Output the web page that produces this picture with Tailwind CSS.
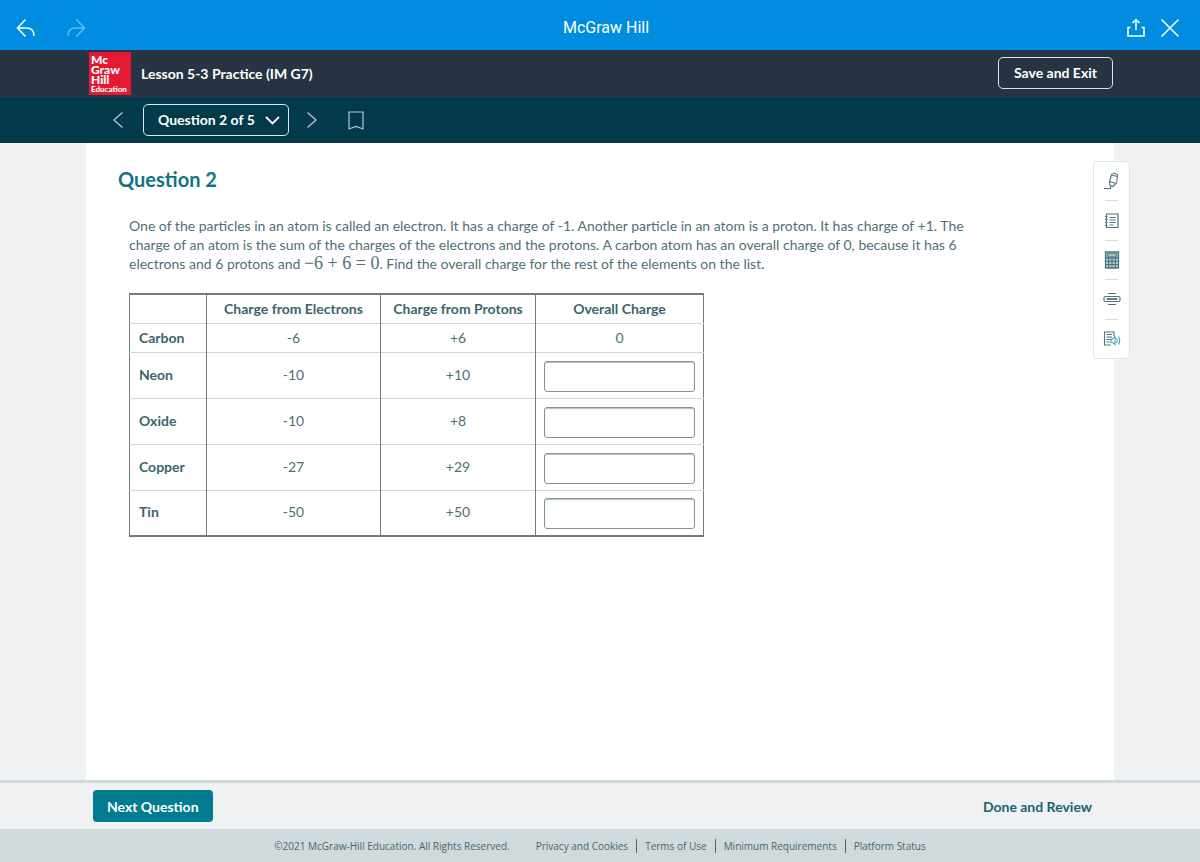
<!DOCTYPE html>
<html lang="en">
<head>
  <meta charset="UTF-8">
  <meta name="viewport" content="width=device-width, initial-scale=1.0">
  <title>Lesson 5-3 Practice (IM G7) - McGraw Hill</title>
  <script src="https://cdn.jsdelivr.net/npm/@tailwindcss/browser@4"></script>
</head>
<body class="min-h-screen flex flex-col bg-[#eff1f2] font-['Lato',sans-serif] text-[14px] text-[#4f7078]">

<!-- App bar -->
<div class="bg-[#008ce0] text-white h-[50px] pl-4 pr-5 pt-[6px] flex justify-between items-center">
  <div class="flex items-center gap-[30px]">
    <button aria-label="Back">
      <svg class="w-5 h-5" viewBox="0 0 20 20" fill="none" stroke="currentColor" stroke-width="1.5"><path d="M9.5 1.5L1.5 10l8 8.5M1.5 10h9c5 0 7.500 3 7.500 8"/></svg>
    </button>
    <button class="text-[#58c0f3]" aria-label="Forward">
      <svg class="w-5 h-5" viewBox="0 0 20 20" fill="none" stroke="currentColor" stroke-width="1.5"><path d="M10.500 1.500l8 8.500-8 8.500M18.500 10h-9C4.500 10 2 13 2 18"/></svg>
    </button>
  </div>
  <div class="text-[16px] font-['Roboto',sans-serif]">McGraw Hill</div>
  <div class="flex items-center gap-[14px]">
    <button aria-label="Share">
      <svg class="w-5 h-5" viewBox="0 0 20 20" fill="none" stroke="currentColor" stroke-width="1.5"><path d="M4.500 9.500H2v8.500h16V9.500h-2.500M10 12V2M6.500 5L10 1.500 13.500 5"/></svg>
    </button>
    <button aria-label="Close">
      <svg class="w-5 h-5" viewBox="0 0 20 20" fill="none" stroke="currentColor" stroke-width="1.5"><path d="M1.500 1.500l17 17M18.500 1.500l-17 17"/></svg>
    </button>
  </div>
</div>

<!-- Lesson header -->
<header class="bg-[#283443] text-white">
  <div class="max-w-[1028px] mx-auto h-[47px] pl-[3px] pr-px pb-px flex items-center justify-between">
    <div class="flex items-center gap-[10px]">
      <div class="w-[42px] h-[43px] bg-[#e31a33] pl-[2px] pt-[3px] text-[12px] leading-[10px] font-black">
        <div>Mc</div>
        <div>Graw</div>
        <div>Hill</div>
        <div class="text-[8px] leading-[9px]">Education</div>
      </div>
      <h1 class="text-[14px] font-bold">Lesson 5-3 Practice (IM G7)</h1>
    </div>
    <button class="h-8 px-[15px] pb-px border border-[#dfe3e7] rounded-[5px] text-[14px] font-bold">Save and Exit</button>
  </div>
</header>

<!-- Question navigation -->
<nav class="bg-[#023a49] text-white">
  <div class="max-w-[1028px] mx-auto h-[46px] pl-[26px] flex items-center">
    <button class="text-[#b9c9ce]" aria-label="Previous question">
      <svg class="w-3 h-[18px]" viewBox="0 0 12 18" fill="none" stroke="currentColor" stroke-width="1.3"><path d="M10.500 1.500L2 9l8.500 7.500"/></svg>
    </button>
    <div class="relative ml-[19px] mr-[17px]">
      <select class="appearance-none w-[146px] h-8 pl-[14px] pb-[2px] border border-[#dfe7ea] rounded-[5px] text-[14px] font-bold" aria-label="Question">
        <option>Question 1 of 5</option>
        <option selected>Question 2 of 5</option>
        <option>Question 3 of 5</option>
        <option>Question 4 of 5</option>
        <option>Question 5 of 5</option>
      </select>
      <svg class="absolute right-[9px] top-3 w-[15px] h-[9px] pointer-events-none" viewBox="0 0 15 9" fill="none" stroke="currentColor" stroke-width="1.800"><path d="M1 1l6.500 6.500L14 1"/></svg>
    </div>
    <button class="text-[#b9c9ce]" aria-label="Next question">
      <svg class="w-3 h-[18px]" viewBox="0 0 12 18" fill="none" stroke="currentColor" stroke-width="1.3"><path d="M1.500 1.500L10 9l-8.500 7.500"/></svg>
    </button>
    <button class="ml-[30px] text-[#b9c9ce]" aria-label="Bookmark">
      <svg class="w-4 h-[19px]" viewBox="0 0 16 19" fill="none" stroke="currentColor" stroke-width="1.2"><path d="M1 1h14v17l-7-2.500L1 18z"/></svg>
    </button>
  </div>
</nav>

<!-- Question -->
<main class="relative grow w-full max-w-[1028px] mx-auto bg-white pl-8 pr-[100px] pt-[23px]">
  <h2 class="text-[20px] leading-[26px] font-bold text-[#117480]">Question 2</h2>

  <div class="pl-[11px] pt-6">
    <p class="max-w-[850px] leading-[19px]">One of the particles in an atom is called an electron. It has a charge of -1. Another particle in an atom is a proton. It has charge of +1. The charge of an atom is the sum of the charges of the electrons and the protons. A carbon atom has an overall charge of 0, because it has 6 electrons and 6 protons and <span class="font-['Liberation_Serif',serif] text-[18px] leading-none">−6 + 6 = 0</span>. Find the overall charge for the rest of the elements on the list.</p>

    <table class="mt-5 w-[574px] table-fixed border-collapse border-x border-y-2 border-[#747b7e] text-center">
      <colgroup>
        <col class="w-[77px]">
        <col class="w-[174px]">
        <col class="w-[155px]">
        <col class="w-[168px]">
      </colgroup>
      <thead>
        <tr class="h-[29px] text-[#3d646d]">
          <td class="border-r border-[#747b7e]"></td>
          <th class="border-r border-[#747b7e]" scope="col">Charge from Electrons</th>
          <th class="border-r border-[#747b7e]" scope="col">Charge from Protons</th>
          <th scope="col">Overall Charge</th>
        </tr>
      </thead>
      <tbody>
        <tr class="h-[29px] border-t border-t-[#d3d6d8]">
          <th class="border-r border-r-[#747b7e] pl-[9px] text-left text-[#3d646d]" scope="row">Carbon</th>
          <td class="border-r border-r-[#747b7e]">-6</td>
          <td class="border-r border-r-[#747b7e]">+6</td>
          <td>0</td>
        </tr>
        <tr class="h-[46px] border-t border-t-[#d3d6d8]">
          <th class="border-r border-r-[#747b7e] pl-[9px] pb-[2px] text-left text-[#3d646d]" scope="row">Neon</th>
          <td class="border-r border-r-[#747b7e] pb-[2px]">-10</td>
          <td class="border-r border-r-[#747b7e] pb-[2px]">+10</td>
          <td class="px-2 pt-[2px]"><input class="block w-full h-[31px] px-2 border border-[#839398] rounded-[3px] shadow-[inset_0_1px_1px_#b4bfc3]" type="text" aria-label="Overall charge of Neon"></td>
        </tr>
        <tr class="h-[46px] border-t border-t-[#d3d6d8]">
          <th class="border-r border-r-[#747b7e] pl-[9px] pb-[2px] text-left text-[#3d646d]" scope="row">Oxide</th>
          <td class="border-r border-r-[#747b7e] pb-[2px]">-10</td>
          <td class="border-r border-r-[#747b7e] pb-[2px]">+8</td>
          <td class="px-2 pt-[2px]"><input class="block w-full h-[31px] px-2 border border-[#839398] rounded-[3px] shadow-[inset_0_1px_1px_#b4bfc3]" type="text" aria-label="Overall charge of Oxide"></td>
        </tr>
        <tr class="h-[46px] border-t border-t-[#d3d6d8]">
          <th class="border-r border-r-[#747b7e] pl-[9px] pb-[2px] text-left text-[#3d646d]" scope="row">Copper</th>
          <td class="border-r border-r-[#747b7e] pb-[2px]">-27</td>
          <td class="border-r border-r-[#747b7e] pb-[2px]">+29</td>
          <td class="px-2 pt-[2px]"><input class="block w-full h-[31px] px-2 border border-[#839398] rounded-[3px] shadow-[inset_0_1px_1px_#b4bfc3]" type="text" aria-label="Overall charge of Copper"></td>
        </tr>
        <tr class="h-[46px] border-t border-t-[#d3d6d8]">
          <th class="border-r border-r-[#747b7e] pl-[9px] pb-[2px] text-left text-[#3d646d]" scope="row">Tin</th>
          <td class="border-r border-r-[#747b7e] pb-[2px]">-50</td>
          <td class="border-r border-r-[#747b7e] pb-[2px]">+50</td>
          <td class="px-2 pt-[2px]"><input class="block w-full h-[31px] px-2 border border-[#839398] rounded-[3px] shadow-[inset_0_1px_1px_#b4bfc3]" type="text" aria-label="Overall charge of Tin"></td>
        </tr>
      </tbody>
    </table>
  </div>

  <!-- Tools panel -->
  <div class="absolute top-[18px] -right-4 w-[37px] h-[198px] bg-white border border-[#e3e6e7] rounded-[4px] flex flex-col items-center text-[#4f7580]">
    <button class="flex-1" aria-label="Highlighter">
      <svg class="w-[18px] h-[18px]" viewBox="0 0 18 18" fill="none" stroke="currentColor" stroke-width="1.1"><path d="M1 16.500h7M8 14.500l-1 2M10 1l4.500 1.200M8.500 3l6 1.500-1 6.500-3.500 3.500-3-1-.5-4zM6.500 9.500l6.500 2M9.500 1.500L8.500 3M14.500 2.500v2"/></svg>
    </button>
    <div class="w-[13px] h-px bg-[#d5dadc]"></div>
    <button class="flex-1" aria-label="Notes">
      <svg class="w-[18px] h-[18px]" viewBox="0 0 18 18" fill="none" stroke="currentColor" stroke-width="1.2"><path d="M3.500 2h11.500v13.500h-11.500zM2 4.500h2.500M2 7.500h2.500M2 10.500h2.500M2 13.500h2.500M6.500 5.500h6M6.500 8h6M6.500 10.500h6M6.500 13h4"/></svg>
    </button>
    <div class="w-[13px] h-px bg-[#d5dadc]"></div>
    <button class="flex-1" aria-label="Calculator">
      <svg class="w-[18px] h-[18px]" viewBox="0 0 18 18" fill="none" stroke="currentColor" stroke-width="1.3"><path fill="#c3d4d9" d="M2.500 1h13v16h-13z"/><path fill="#fff" d="M4.500 2.800h9v2.400h-9z"/><path d="M2.500 7h13M2.500 10.300h13M2.500 13.600h13M5.700 7v10M9 7v10M12.300 7v10"/></svg>
    </button>
    <div class="w-[13px] h-px bg-[#d5dadc]"></div>
    <button class="flex-1" aria-label="Line reader">
      <svg class="w-[18px] h-[18px]" viewBox="0 0 18 18" fill="none" stroke="currentColor" stroke-width="1.2"><rect x="1" y="6.500" width="16" height="5" rx="1.500"/><path stroke-width="1.800" d="M3.500 9h11"/><path d="M5 3.500h8M5 14.500h8"/></svg>
    </button>
    <div class="w-[13px] h-px bg-[#d5dadc]"></div>
    <button class="flex-1" aria-label="Read aloud">
      <svg class="w-[18px] h-[18px]" viewBox="0 0 18 18" fill="none" stroke="currentColor" stroke-width="1.1"><path d="M11 6V2H1.500v13H8M3.500 4.500H9M3.500 7H9M3.500 9.500h4M3.500 12h3"/><path stroke="#43a5ba" d="M8 9h1.500L12 6.500v8L9.500 12.500H8zM13.500 8q1.500 2.500 0 5M15.500 6.500q2.500 4 0 8"/></svg>
    </button>
  </div>
</main>

<!-- Action bar -->
<div class="border-t-[3px] border-[#d0d9dc] bg-[#f0f1f2]">
  <div class="max-w-[1028px] mx-auto h-[46px] pl-[7px] pr-[22px] flex items-center justify-between">
    <button class="h-8 px-[14px] rounded-[4px] bg-[#007b8f] text-white text-[14px] font-bold">Next Question</button>
    <button class="text-[14px] font-bold text-[#19636f]">Done and Review</button>
  </div>
</div>

<!-- Footer -->
<footer class="h-[33px] bg-[#d0d9dc] flex items-center justify-center font-['Open_Sans',sans-serif] text-[10px] leading-[14px] text-[#46666f]">
  <span class="mr-[26px]">©2021 McGraw-Hill Education. All Rights Reserved.</span>
  <a class="pr-2 border-r border-[#46666f]" href="#">Privacy and Cookies</a>
  <a class="px-2 border-r border-[#46666f]" href="#">Terms of Use</a>
  <a class="px-2 border-r border-[#46666f]" href="#">Minimum Requirements</a>
  <a class="pl-2" href="#">Platform Status</a>
</footer>

</body>
</html>
